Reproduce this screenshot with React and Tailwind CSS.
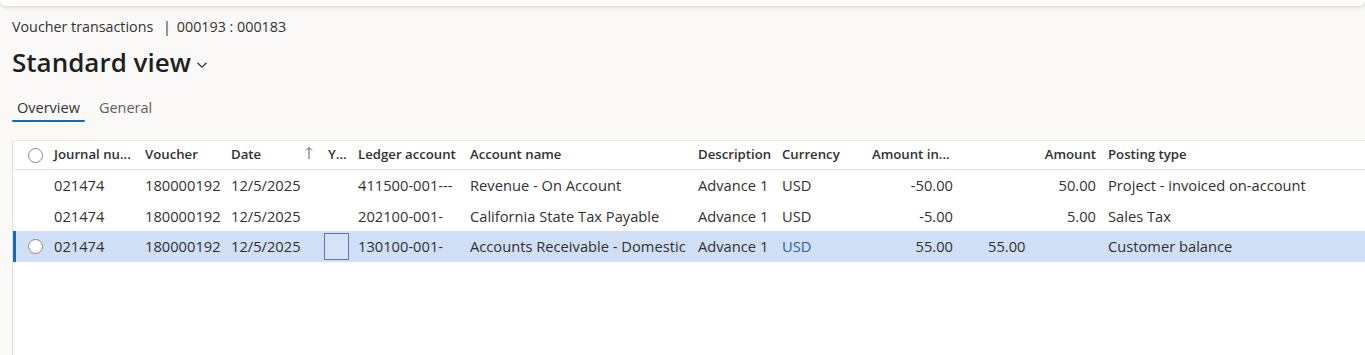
const rows = [
  { journal: '021474', voucher: '180000192', date: '12/5/2025', ledger: '411500-001---', name: 'Revenue - On Account', desc: 'Advance 1', cur: 'USD', amtCur: '-50.00', debit: '', amount: '50.00', posting: 'Project - invoiced on-account' },
  { journal: '021474', voucher: '180000192', date: '12/5/2025', ledger: '202100-001-', name: 'California State Tax Payable', desc: 'Advance 1', cur: 'USD', amtCur: '-5.00', debit: '', amount: '5.00', posting: 'Sales Tax' },
  { journal: '021474', voucher: '180000192', date: '12/5/2025', ledger: '130100-001-', name: 'Accounts Receivable - Domestic', desc: 'Advance 1', cur: 'USD', amtCur: '55.00', debit: '55.00', amount: '', posting: 'Customer balance', selected: true },
]

function Radio() {
  return <span className="block w-[15px] h-[15px] rounded-full border border-[#8a8886] bg-white" />
}

function Row({ r }) {
  const sel = r.selected
  return (
    <div className={`flex items-center h-[30.5px] text-[14.7px] text-[#323130] ${sel ? 'bg-[#cfdff5] border-l-[3px] border-[#0f6cbd]' : 'border-l-[3px] border-transparent'}`}>
      <div className="w-[38px] flex justify-center pl-[1px]">{sel && <Radio />}</div>
      <div className="w-[91px]">{r.journal}</div>
      <div className="w-[86px]">{r.voucher}</div>
      <div className="w-[92px]">{r.date}</div>
      <div className="w-[35px] flex pl-[1px]">
        {sel && <span className="block w-[25px] h-[27px] border border-[#5b78b0] bg-[#d6e3f7]" />}
      </div>
      <div className="w-[112px] whitespace-nowrap">{r.ledger}</div>
      <div className="w-[228px] whitespace-nowrap">{r.name}</div>
      <div className="w-[84px] whitespace-nowrap">{r.desc}</div>
      <div className={`w-[90px] ${sel ? 'text-[#2f5ea8]' : ''}`}>{r.cur}</div>
      <div className="w-[81px] text-right">{r.amtCur}</div>
      <div className="w-[80px] pl-[35px]">{r.debit}</div>
      <div className="w-[63px] text-right">{r.amount}</div>
      <div className="pl-[12px] whitespace-nowrap">{r.posting}</div>
    </div>
  )
}

export default function App() {
  return (
    <div className="w-[1365px] h-[355px] overflow-hidden bg-[#faf9f8] font-['Open_Sans',sans-serif] text-[14px] text-[#323130]">
      <div className="h-[6px] bg-white rounded-b-[6px] shadow-[0_1px_4px_rgba(0,0,0,0.18)]" />

      <div className="pl-[12px] pt-[11px] leading-[20px] text-[14.3px]">
        Voucher transactions <span className="mx-[6px]">|</span>000193 : 000183
      </div>

      <div className="pl-[12px] mt-[9px] flex items-center h-[32px]">
        <h1 className="text-[26px] font-semibold leading-[32px] text-[#201f1e]">Standard view</h1>
        <svg className="ml-[5px] mt-[6px]" width="12" height="8" viewBox="0 0 12 8" fill="none">
          <path d="M1.5 1.8 L6 6.2 L10.5 1.8" stroke="#323130" strokeWidth="1.2" />
        </svg>
      </div>

      <div className="pl-[12px] mt-[19px] flex h-[28px] text-[14.5px]">
        <div className="relative px-[5px] leading-[22px]">
          Overview
          <span className="absolute left-0 right-0 bottom-[3px] h-[2px] rounded bg-[#0f6cbd]" />
        </div>
        <div className="ml-[14px] leading-[22px] text-[#605e5c]">General</div>
      </div>

      <div className="ml-[12px] mt-[15px] h-[300px] bg-white border-t border-[#edebe9] border-l border-l-[#e1dfdd]">
        <div className="flex items-center h-[29px] border-b border-[#e6e4e2] font-semibold text-[13.2px] text-[#323130] border-l-[3px] border-l-transparent">
          <div className="w-[38px] flex justify-center pl-[1px]"><Radio /></div>
          <div className="w-[91px] whitespace-nowrap">Journal nu...</div>
          <div className="w-[86px]">Voucher</div>
          <div className="w-[92px] flex items-center">
            <span className="w-[74px]">Date</span>
            <svg width="8" height="14" viewBox="0 0 8 14" fill="none" className="mb-[4px]">
              <path d="M4 13 V1.5 M1 4.5 L4 1.5 L7 4.5" stroke="#605e5c" strokeWidth="1" />
            </svg>
          </div>
          <div className="w-[35px] pl-[5px]">Y...</div>
          <div className="w-[112px] whitespace-nowrap">Ledger account</div>
          <div className="w-[228px]">Account name</div>
          <div className="w-[84px]">Description</div>
          <div className="w-[90px]">Currency</div>
          <div className="w-[81px] whitespace-nowrap">Amount in...</div>
          <div className="w-[80px]" />
          <div className="w-[63px] text-right">Amount</div>
          <div className="pl-[12px] whitespace-nowrap">Posting type</div>
        </div>
        {rows.map((r, i) => <Row key={i} r={r} />)}
      </div>
    </div>
  )
}
